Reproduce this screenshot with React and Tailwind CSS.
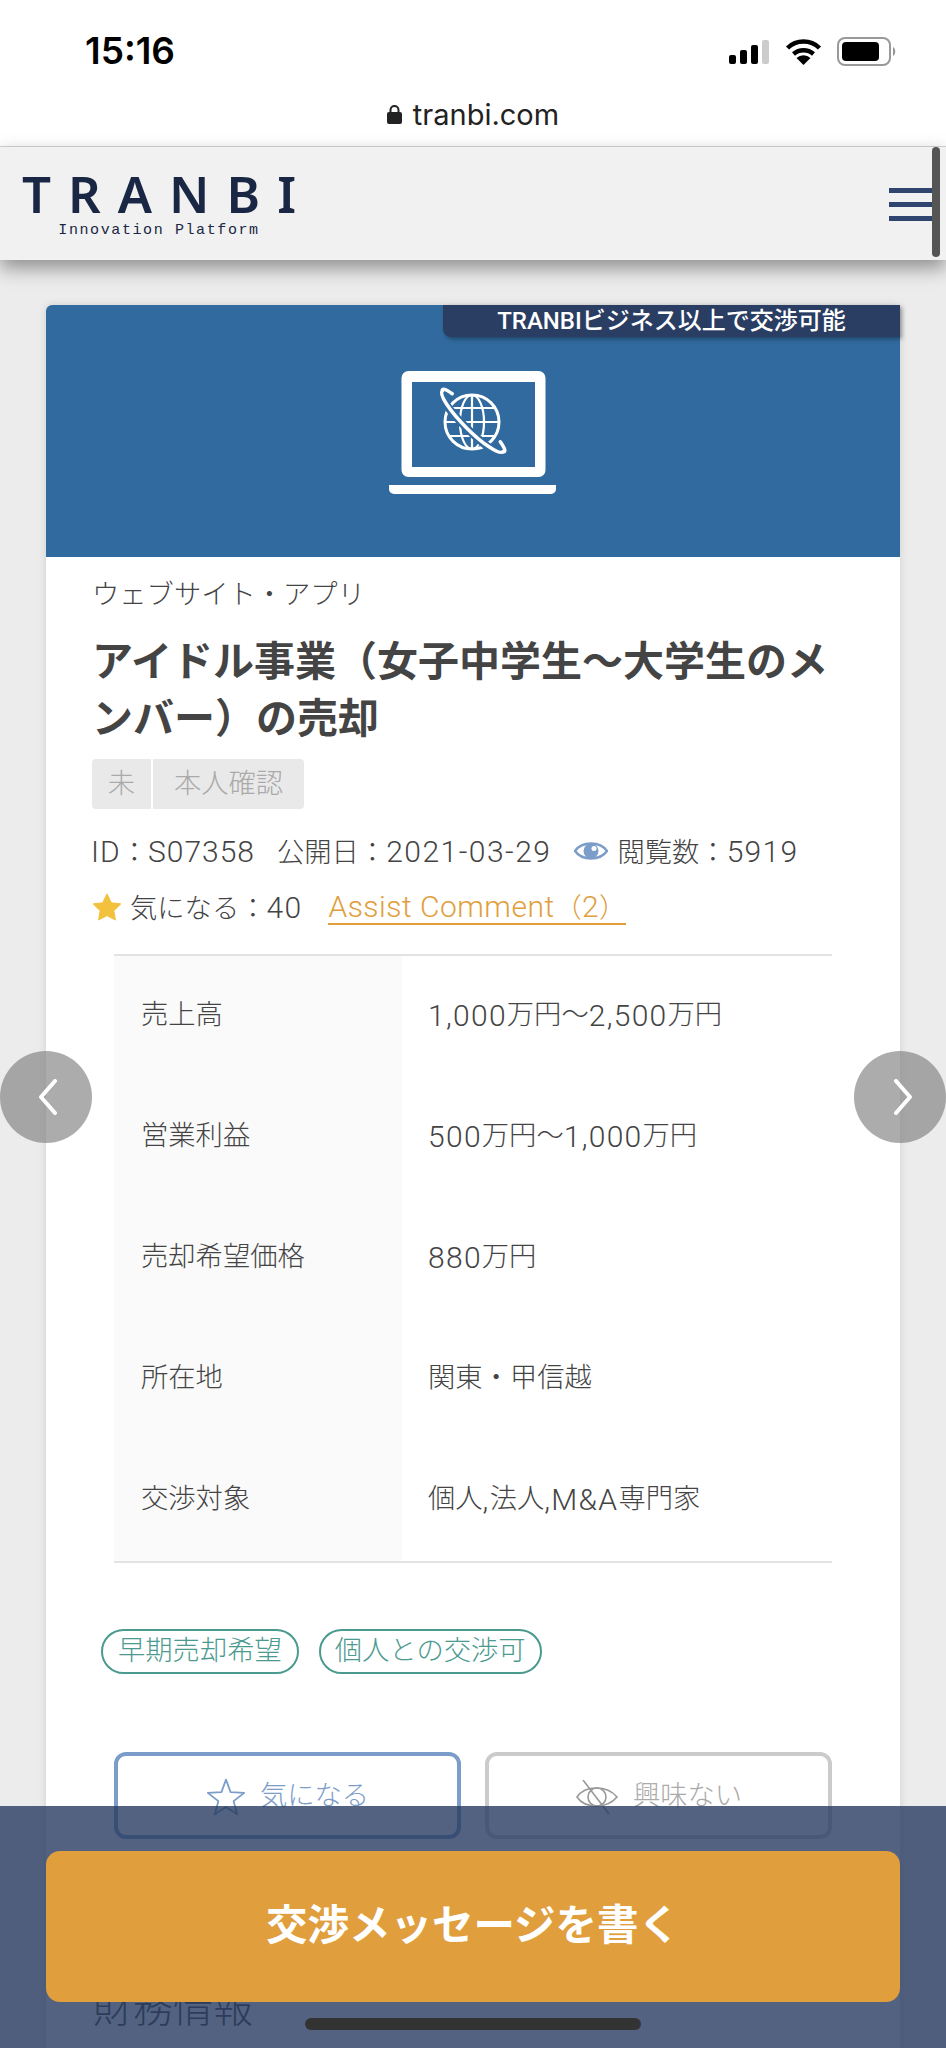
import React from 'react';
import { twMerge } from 'tailwind-merge';

const rows = [
  ['売上高', <><Lat>1,000</Lat>万円〜<Lat>2,500</Lat>万円</>],
  ['営業利益', <><Lat>500</Lat>万円〜<Lat>1,000</Lat>万円</>],
  ['売却希望価格', <><Lat>880</Lat>万円</>],
  ['所在地', '関東・甲信越'],
  ['交渉対象', <>個人<Lat>,</Lat>法人<Lat>,M&amp;A</Lat>専門家</>],
];

// latin runs are a bit bigger and lighter than the kana around them
function Lat({ children, className }) {
  return <span className={twMerge('text-[30px] font-light tracking-[1.3px] font-[Roboto,sans-serif]', className)}>{children}</span>;
}

const StatusIcons = () => (
  <div className="flex items-center mt-[2px]">
    <svg width="42" height="24" viewBox="0 0 42 24" className="mr-[14px]">
      <rect x="0" y="15" width="7" height="9" rx="2" fill="#000" />
      <rect x="11" y="10" width="7" height="14" rx="2" fill="#000" />
      <rect x="22" y="5" width="7" height="19" rx="2" fill="#000" />
      <rect x="33" y="0" width="7" height="24" rx="2" fill="#ccc" />
    </svg>
    <svg width="37" height="28" viewBox="0 0 36 28" className="mr-[15px]">
      <path d="M2 10 A23 23 0 0 1 34 10" fill="none" stroke="#000" strokeWidth="4.5" />
      <path d="M8 16 A15 15 0 0 1 28 16" fill="none" stroke="#000" strokeWidth="4.5" />
      <path d="M18 27 L11 20 A10 10 0 0 1 25 20 Z" fill="#000" />
    </svg>
    <svg width="60" height="30" viewBox="0 0 60 30">
      <rect x="1" y="1" width="52" height="27" rx="7" fill="#fff" stroke="#999" strokeWidth="2" />
      <rect x="5" y="5" width="37" height="19" rx="4" fill="#000" />
      <path d="M56 10 C59 11 59 18 56 19 Z" fill="#999" />
    </svg>
  </div>
);

const Laptop = () => (
  <svg width="170" height="124" viewBox="0 0 170 124">
    <rect x="13.5" y="0" width="144" height="106" rx="7" fill="#fff" />
    <rect x="24" y="11" width="123" height="85" fill="#316a9e" />
    <path d="M1 114 H168 V118 a5 5 0 0 1 -5 5 H6 a5 5 0 0 1 -5 -5 Z" fill="#fff" />
    <g fill="none" stroke="#fff" strokeWidth="2.2">
      <circle cx="84" cy="51" r="27" strokeWidth="3" />
      <ellipse cx="84" cy="51" rx="12" ry="27" />
      <path d="M84 24 V78 M57 51 H111 M61 37 H107 M61 65 H107" />
    </g>
    <g transform="rotate(45 84 51)" fill="none">
      <path d="M42 52 A42 7 0 0 0 126 52" stroke="#316a9e" strokeWidth="8" />
      <path d="M41 50 A43 9 0 0 0 127 50" stroke="#fff" strokeWidth="3.5" strokeLinecap="round" />
      <path d="M41 50 A43 6 0 0 1 50 45" stroke="#fff" strokeWidth="3.5" strokeLinecap="round" />
      <path d="M127 50 A43 6 0 0 0 118 45" stroke="#fff" strokeWidth="3.5" strokeLinecap="round" />
    </g>
  </svg>
);

const Chevron = ({ left }) => (
  <svg width="20" height="36" viewBox="0 0 20 36" fill="none" stroke="#fff" strokeWidth="4" strokeLinecap="round" strokeLinejoin="round">
    <path d={left ? 'M17 2 L3 18 L17 34' : 'M3 2 L17 18 L3 34'} />
  </svg>
);

export default function App() {
  return (
    <div className="relative w-[946px] h-[2048px] overflow-hidden bg-[#ececec] text-[#444] font-['Liberation_Sans','Noto_Sans_CJK_JP',sans-serif]">
      {/* status bar + url */}
      <div className="h-[147px] bg-white border-b border-[#d5d5d5] flex flex-col">
        <div className="h-[94px] flex justify-between items-center pl-[85px] pr-[49px] pt-[8px]">
          <span className="text-[37px] font-semibold text-black font-[Inter,sans-serif]">15:16</span>
          <StatusIcons />
        </div>
        <div className="flex items-center justify-center gap-[11px] text-[#222] text-[29px] leading-none mt-[6px] font-[Inter,sans-serif]">
          <svg width="15" height="19" viewBox="0 0 15 19">
            <path d="M3.5 8 V5 a4 4 0 0 1 8 0 V8" fill="none" stroke="#222" strokeWidth="2" />
            <rect x="0" y="7" width="15" height="12" rx="2" fill="#222" />
          </svg>
          <span>tranbi.com</span>
        </div>
      </div>

      {/* site header */}
      <header className="relative h-[113px] bg-[#f1f1f1] shadow-[0_8px_18px_rgba(0,0,0,0.4)] flex items-start justify-between pl-[22px]">
        <div className="flex flex-col items-center w-[274px] pt-[21px]">
          <span className="text-[51px] leading-[50px] font-semibold text-[#1a2744] tracking-[17px] mr-[-17px] font-['Noto_Sans',sans-serif]">TRANBI</span>
          <span className="text-[15px] leading-[16px] text-[#1a2744] tracking-[1.6px] mt-[5px] font-['Liberation_Mono',monospace]">Innovation Platform</span>
        </div>
        <div className="flex flex-col gap-[9px] w-[46px] mt-[41px] mr-[11px]">
          <div className="h-[5px] bg-[#2f4570]" />
          <div className="h-[5px] bg-[#2f4570]" />
          <div className="h-[5px] bg-[#2f4570]" />
        </div>
        <div className="absolute right-[6px] top-0 w-[8px] h-[110px] rounded-full bg-[#555]" />
      </header>

      {/* card */}
      <main className="mx-[46px] mt-[45px] pb-[60px] bg-white rounded-t-[6px] shadow-[0_0_8px_rgba(0,0,0,0.12)]">
        <div className="relative h-[252px] rounded-t-[6px] bg-[#316a9e] flex justify-center pt-[66px]">
          <Laptop />
          <div className="absolute top-0 right-0 w-[457px] h-[32px] rounded-bl-[8px] bg-[#2a3d63] shadow-[2px_2px_4px_rgba(0,0,0,0.35)] flex items-center justify-center text-white text-[24px] font-medium leading-none font-['Roboto','Noto_Sans_CJK_JP',sans-serif]">
            TRANBIビジネス以上で交渉可能
          </div>
        </div>

        <div className="px-[46px]">
          <p className="text-[27.3px] leading-[36px] font-light pt-[20px]">ウェブサイト・アプリ</p>
          <h1 className="text-[41px] leading-[57px] font-bold mt-[21px]">アイドル事業（女子中学生〜大学生のメンバー）の売却</h1>

          <div className="flex w-[212px] h-[50px] mt-[11px] rounded-[4px] overflow-hidden text-[27.3px] font-light text-[#aaa]">
            <span className="w-[59px] bg-[#e9e9e9] flex items-center justify-center">未</span>
            <span className="flex-1 ml-[2px] bg-[#e9e9e9] flex items-center justify-center">本人確認</span>
          </div>

          <div className="flex items-center h-[40px] mt-[22px] text-[27.3px] font-light whitespace-nowrap">
            <span className="-ml-[1px]"><Lat className="tracking-[1px]">ID</Lat>：<Lat className="tracking-[1px]">S07358</Lat></span>
            <span className="ml-[22px]">公開日：<Lat className="tracking-[1.5px]">2021-03-29</Lat></span>
            <svg width="34" height="24" viewBox="0 0 34 24" className="ml-[23px] mr-[9px]">
              <path d="M1 12 C8 2 26 2 33 12 C26 22 8 22 1 12 Z" fill="#fff" stroke="#7c9dc9" strokeWidth="2.5" />
              <circle cx="17" cy="12" r="7.5" fill="#7c9dc9" />
              <circle cx="20" cy="9.5" r="2.5" fill="#fff" />
            </svg>
            <span>閲覧数：<Lat>5919</Lat></span>
          </div>

          <div className="flex items-center h-[40px] mt-[16px] text-[27.3px] font-light whitespace-nowrap">
            <svg width="30" height="28" viewBox="0 0 24 23">
              <path d="M12 1 L15.4 8 L23 9 L17.5 14.4 L18.8 22 L12 18.4 L5.2 22 L6.5 14.4 L1 9 L8.6 8 Z" fill="#f2c23d" stroke="#f2c23d" strokeLinejoin="round" />
            </svg>
            <span className="ml-[8px]">気になる：<Lat>40</Lat></span>
            <a className="ml-[26px] text-[#e09e3d] border-b-2 border-[#e09e3d] leading-[30px] mt-[2px]"><Lat className="tracking-[0.5px]">Assist Comment</Lat>（<Lat className="tracking-[0.5px]">2</Lat>）</a>
          </div>
        </div>

        {/* summary table */}
        <div className="mx-[68px] mt-[27px] border-y-2 border-[#e3e3e3]">
          {rows.map(([k, v]) => (
            <div key={k} className="flex h-[121px] text-[27.3px] font-light">
              <div className="w-[288px] bg-[#fafafa] pl-[27px] pb-[2px] flex items-center">{k}</div>
              <div className="pl-[26px] pb-[2px] flex items-center">{v}</div>
            </div>
          ))}
        </div>

        <div className="flex gap-[20px] ml-[55px] mt-[66px] text-[27.3px] font-light text-[#4b9a90]">
          <span className="h-[45px] px-[15px] rounded-full border-2 border-[#4b9a90] flex items-center">早期売却希望</span>
          <span className="h-[45px] px-[14px] rounded-full border-2 border-[#4b9a90] flex items-center">個人との交渉可</span>
        </div>

        <div className="flex gap-[24px] mx-[68px] mt-[78px] text-[27.3px] font-light">
          <button className="flex-1 h-[87px] rounded-[12px] border-4 border-[#7c9dc9] text-[#7c9dc9] flex items-center justify-center gap-[14px] pt-[2px]">
            <svg width="40" height="38" viewBox="0 0 24 23" fill="none" stroke="#7c9dc9" strokeWidth="1.1" strokeLinejoin="round">
              <path d="M12 1 L14.8 8.6 L23 9 L16.6 14 L18.8 22 L12 17.5 L5.2 22 L7.4 14 L1 9 L9.2 8.6 Z" />
            </svg>
            <span>気になる</span>
          </button>
          <button className="flex-1 h-[87px] rounded-[12px] border-4 border-[#cbcbcb] text-[#aaa] flex items-center justify-center gap-[14px] pt-[2px]">
            <svg width="44" height="34" viewBox="0 0 44 34" fill="none" stroke="#999" strokeWidth="1.6">
              <path d="M2 17 C10 5 32 5 42 17 C32 29 10 29 2 17 Z" />
              <circle cx="22" cy="17" r="9" />
              <path d="M8 0 L34 34" />
            </svg>
            <span>興味ない</span>
          </button>
        </div>

        <h2 className="text-[40px] leading-[56px] font-light ml-[47px] mt-[141px]">財務情報</h2>
      </main>

      {/* carousel arrows */}
      <button className="absolute left-0 top-[1051px] w-[92px] h-[92px] rounded-full bg-[#808080]/65 flex items-center justify-center pl-[4px]">
        <Chevron left />
      </button>
      <button className="absolute right-0 top-[1051px] w-[92px] h-[92px] rounded-full bg-[#808080]/65 flex items-center justify-center pl-[6px]">
        <Chevron />
      </button>

      {/* fixed bottom bar */}
      <div className="absolute left-0 right-0 top-[1806px] bottom-0 bg-[#273b60]/80 px-[46px] pt-[45px]">
        <button className="w-full h-[151px] rounded-[14px] bg-[#e09e3d] text-white text-[41.5px] font-bold">交渉メッセージを書く</button>
      </div>
      <div className="absolute left-[305px] top-[2018px] w-[336px] h-[12px] rounded-full bg-[#333]" />
    </div>
  );
}
